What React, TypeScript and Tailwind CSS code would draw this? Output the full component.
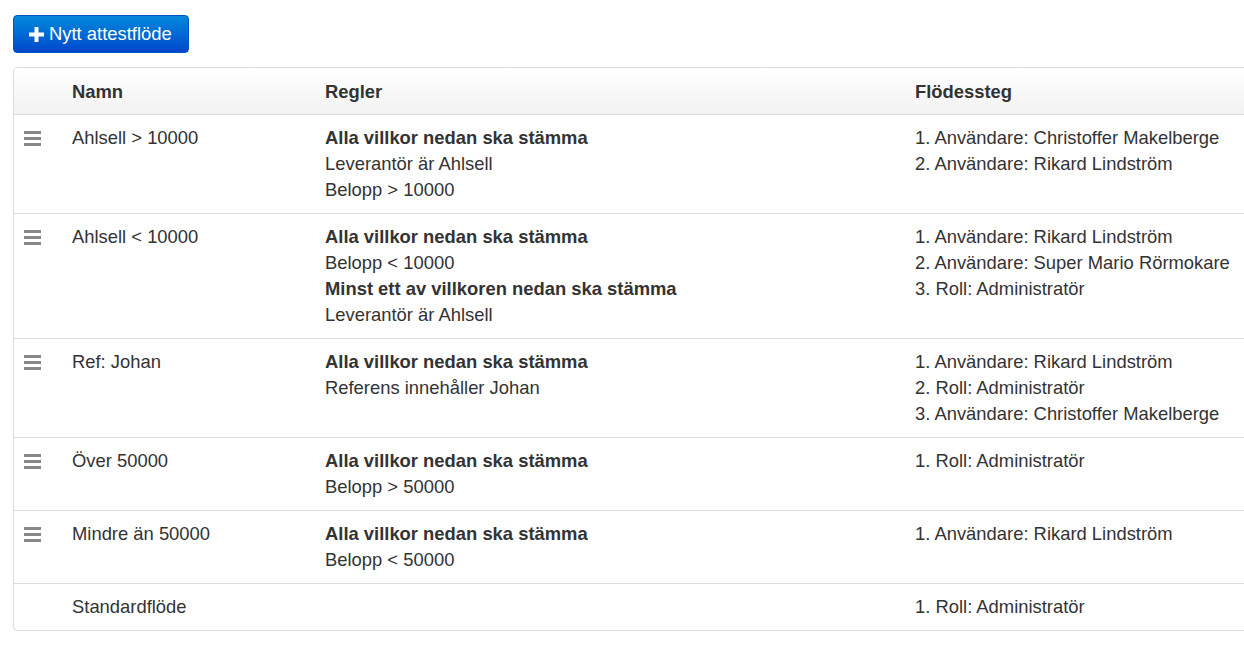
const rows = [
  {
    name: "Ahlsell > 10000",
    rules: [
      { t: "Alla villkor nedan ska stämma", b: true },
      { t: "Leverantör är Ahlsell" },
      { t: "Belopp > 10000" },
    ],
    steps: ["1. Användare: Christoffer Makelberge", "2. Användare: Rikard Lindström"],
    drag: true,
  },
  {
    name: "Ahlsell < 10000",
    rules: [
      { t: "Alla villkor nedan ska stämma", b: true },
      { t: "Belopp < 10000" },
      { t: "Minst ett av villkoren nedan ska stämma", b: true },
      { t: "Leverantör är Ahlsell" },
    ],
    steps: [
      "1. Användare: Rikard Lindström",
      "2. Användare: Super Mario Rörmokare",
      "3. Roll: Administratör",
    ],
    drag: true,
  },
  {
    name: "Ref: Johan",
    rules: [{ t: "Alla villkor nedan ska stämma", b: true }, { t: "Referens innehåller Johan" }],
    steps: [
      "1. Användare: Rikard Lindström",
      "2. Roll: Administratör",
      "3. Användare: Christoffer Makelberge",
    ],
    drag: true,
  },
  {
    name: "Över 50000",
    rules: [{ t: "Alla villkor nedan ska stämma", b: true }, { t: "Belopp > 50000" }],
    steps: ["1. Roll: Administratör"],
    drag: true,
  },
  {
    name: "Mindre än 50000",
    rules: [{ t: "Alla villkor nedan ska stämma", b: true }, { t: "Belopp < 50000" }],
    steps: ["1. Användare: Rikard Lindström"],
    drag: true,
  },
  {
    name: "Standardflöde",
    rules: [],
    steps: ["1. Roll: Administratör"],
    drag: false,
  },
];

function Handle() {
  return (
    <div className="flex flex-col gap-[3.5px] w-[17px] pt-[6px]">
      <span className="h-[2.5px] bg-[#888888]" />
      <span className="h-[2.5px] bg-[#888888]" />
      <span className="h-[2.5px] bg-[#888888]" />
    </div>
  );
}

export default function App() {
  return (
    <div
      className="min-h-screen bg-white text-[#333] text-[18.4px] leading-[26px] overflow-hidden"
      style={{ fontFamily: '"Liberation Sans", Arial, sans-serif' }}
    >
      <div className="pt-[15px] pl-[13px]">
        <button className="flex items-center gap-[5px] h-[38px] pl-[16px] pr-[16px] rounded-[4px] border border-[#0052c4] bg-gradient-to-b from-[#0a88dc] to-[#0047cc] text-white text-[18.4px]">
          <svg width="15" height="15" viewBox="0 0 15 15" className="-ml-[1px]">
            <path d="M5.5 0h4v5.5H15v4H9.5V15h-4V9.5H0v-4h5.5z" fill="white" />
          </svg>
          Nytt attestflöde
        </button>
      </div>

      <div className="mt-[14px] ml-[13px] w-[1260px] border border-[#dddddd] rounded-[4px] overflow-hidden">
        <div className="flex h-[47px] pt-[1px] items-center font-bold bg-gradient-to-b from-white to-[#f2f2f2] border-b border-[#dddddd]">
          <div className="w-[46px]" />
          <div className="w-[253px] px-[12px]">Namn</div>
          <div className="w-[590px] px-[12px]">Regler</div>
          <div className="flex-1 px-[12px]">Flödessteg</div>
        </div>
        {rows.map((r, i) => (
          <div
            key={r.name}
            className={`flex pt-[10px] pb-[10px] ${i < rows.length - 1 ? "border-b border-[#dddddd]" : ""}`}
          >
            <div className="w-[46px] pl-[10px]">{r.drag && <Handle />}</div>
            <div className="w-[253px] px-[12px]">{r.name}</div>
            <div className="w-[590px] px-[12px]">
              {r.rules.map((x, j) => (
                <div key={j} className={x.b ? "font-bold" : ""}>
                  {x.t}
                </div>
              ))}
            </div>
            <div className="flex-1 px-[12px] whitespace-nowrap">
              {r.steps.map((s) => (
                <div key={s}>{s}</div>
              ))}
            </div>
          </div>
        ))}
      </div>
    </div>
  );
}
